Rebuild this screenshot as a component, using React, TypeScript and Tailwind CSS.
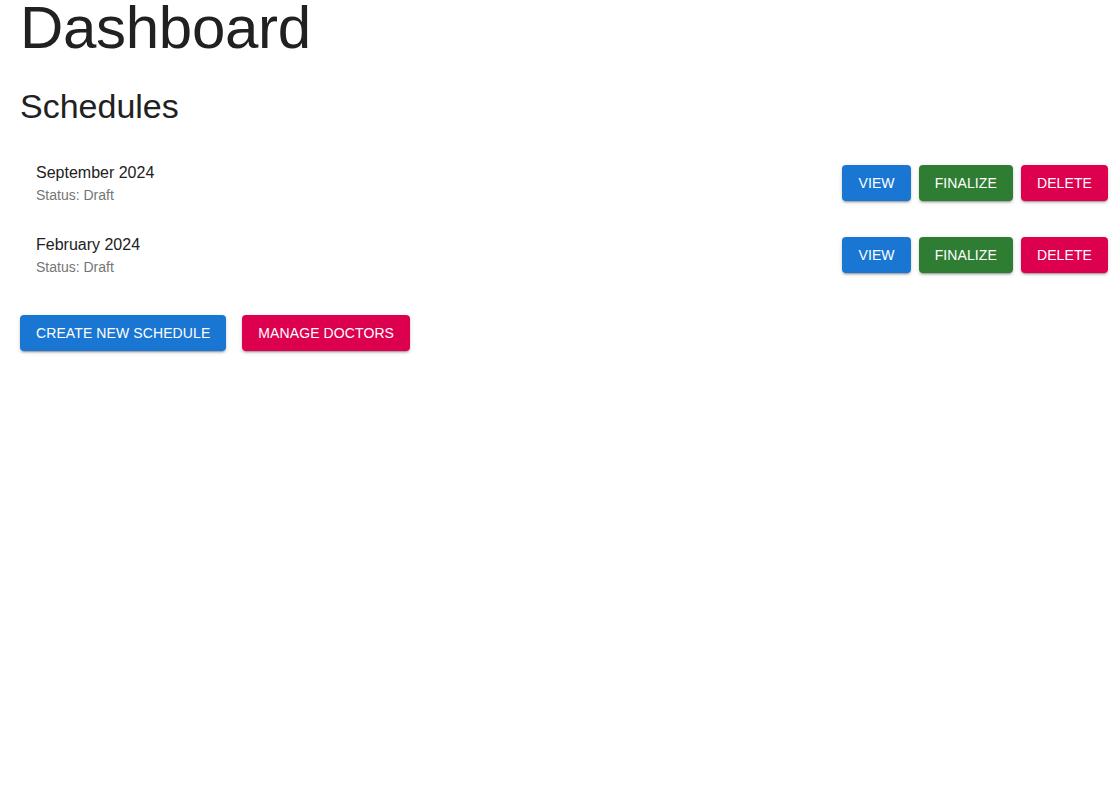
import React from "react";

const shadow =
  "shadow-[0px_3px_1px_-2px_rgba(0,0,0,0.2),0px_2px_2px_0px_rgba(0,0,0,0.14),0px_1px_5px_0px_rgba(0,0,0,0.12)]";

function Btn({ color, children }: { color: "blue" | "green" | "pink"; children: React.ReactNode }) {
  const bg =
    color === "blue" ? "bg-[#1976d2]" : color === "green" ? "bg-[#2e7d32]" : "bg-[#dc004e]";
  return (
    <button
      className={`${bg} ${shadow} h-9 px-4 rounded text-white text-[14px] uppercase tracking-[0.1px] leading-[24px] flex items-center justify-center`}
    >
      {children}
    </button>
  );
}

const schedules = [
  { name: "September 2024", status: "Draft" },
  { name: "February 2024", status: "Draft" },
];

export default function App() {
  return (
    <div
      className="bg-white min-h-[790px] pl-5 pr-[7px] text-[#212121]"
      style={{ fontFamily: '"Liberation Sans", Arial, sans-serif' }}
    >
      <h1 className="text-[60px] leading-[56px] pt-[0px] font-normal tracking-[-0.3px]">Dashboard</h1>
      <h2 className="mt-[29px] text-[34px] leading-[42px] font-normal mb-3">Schedules</h2>
      <ul className="py-2">
        {schedules.map((s) => (
          <li key={s.name} className="h-[72px] flex items-center justify-between pl-4">
            <div>
              <div className="text-[16px] leading-[24px]">{s.name}</div>
              <div className="text-[14px] leading-[20px] text-[#757575]">Status: {s.status}</div>
            </div>
            <div className="flex gap-2">
              <Btn color="blue">View</Btn>
              <Btn color="green">Finalize</Btn>
              <Btn color="pink">Delete</Btn>
            </div>
          </li>
        ))}
      </ul>
      <div className="mt-4 flex gap-4">
        <Btn color="blue">Create New Schedule</Btn>
        <Btn color="pink">Manage Doctors</Btn>
      </div>
    </div>
  );
}
